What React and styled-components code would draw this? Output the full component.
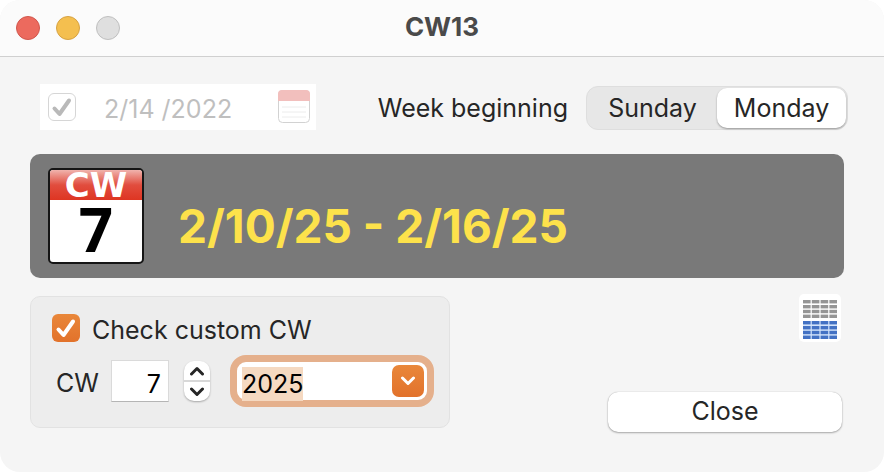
import { useEffect, useRef, useState } from "react";
import styled, { createGlobalStyle, css } from "styled-components";

const GRID_COLS = [4, 12.8, 21.6, 30.4];
const GRID_ROWS = [6, 11, 15.8, 20.6, 27, 32, 36.8, 41.6];

const CheckMark = ({ color }) => (
  <svg width="28" height="28" viewBox="0 0 28 28" aria-hidden="true">
    <path
      d="M6.5 15.5 11.5 21 21 7.5"
      fill="none"
      stroke={color}
      strokeWidth="4"
      strokeLinecap="round"
      strokeLinejoin="round"
    />
  </svg>
);

const Chevron = ({ up, color = "#262626" }) => (
  <svg width="16" height="10" viewBox="0 0 16 10" aria-hidden="true">
    <path
      d={up ? "M2.5 8 8 2.5 13.5 8" : "M2.5 2 8 7.5 13.5 2"}
      fill="none"
      stroke={color}
      strokeWidth="3"
      strokeLinecap="round"
      strokeLinejoin="round"
    />
  </svg>
);

const CalendarIcon = () => (
  <svg width="32" height="34" viewBox="0 0 32 34" aria-hidden="true">
    <rect x="0.5" y="0.5" width="31" height="32" rx="4" fill="#fff" stroke="#d2d2d2" />
    <path d="M0 11V4a4 4 0 0 1 4-4h24a4 4 0 0 1 4 4v7z" fill="#f2bfbd" />
    <path d="M4 17h24M4 22h24M4 27h24" stroke="#ececec" />
  </svg>
);

const WeekIcon = () => (
  <svg width="96" height="96" viewBox="0 0 96 96">
    <defs>
      <linearGradient id="head" x1="0" y1="0" x2="0" y2="1">
        <stop offset="0" stopColor="#f0b3ad" />
        <stop offset="0.5" stopColor="#e14d3e" />
        <stop offset="1" stopColor="#de3522" />
      </linearGradient>
    </defs>
    <rect x="1" y="1" width="94" height="94" rx="4" fill="#fff" stroke="#151515" strokeWidth="2" />
    <path d="M2 32V5a3 3 0 0 1 3-3h86a3 3 0 0 1 3 3v27z" fill="url(#head)" />
    <TileText x="48" y="29" $font="DejaVu Sans" $size={34} $color="#fff">
      CW
    </TileText>
    <TileText x="48" y="84" $font="Open Sans" $size={60} $color="#000">
      7
    </TileText>
  </svg>
);

const TableIcon = () => (
  <svg width="42" height="48" viewBox="0 0 42 48" aria-hidden="true">
    <rect width="42" height="48" rx="5" fill="#fff" />
    <rect x="4" y="27" width="34" height="18" fill="#d4e4fb" />
    {GRID_ROWS.map((y, row) =>
      GRID_COLS.map((x) => (
        <rect
          key={`${x}-${y}`}
          x={x}
          y={y}
          width="7.6"
          height="3.4"
          fill={row < 4 ? "#959595" : "#4472c4"}
        />
      ))
    )}
  </svg>
);

const App = () => {
  const [firstDay, setFirstDay] = useState("Monday");
  const [custom, setCustom] = useState(true);
  const [week, setWeek] = useState(7);
  const [year, setYear] = useState("2025");
  const yearRef = useRef(null);

  useEffect(() => {
    yearRef.current.focus();
    yearRef.current.select();
  }, []);

  return (
    <>
      <GlobalStyle />
      <Window>
        <TitleBar>
          <Lights>
            <Light type="button" aria-label="Close window" $color="#ec6a5e" $edge="#d0574d" />
            <Light type="button" aria-label="Minimize" $color="#f4bf4f" $edge="#d6a243" />
            <Light type="button" aria-label="Zoom" disabled $color="#dfdfdf" $edge="#bfbfbf" />
          </Lights>
          <Title>CW13</Title>
        </TitleBar>
        <Content>
          <TopRow>
            <DatePicker>
              <CheckWrap $disabled>
                <input type="checkbox" aria-label="Use date" checked disabled readOnly />
                <CheckMark color="#b9b9b9" />
              </CheckWrap>
              <DateInput aria-label="Date" value="2/14 /2022" disabled readOnly />
              <CalendarIcon />
            </DatePicker>
            <WeekStart>
              <span id="week-start">Week beginning</span>
              <Segments role="group" aria-labelledby="week-start">
                {["Sunday", "Monday"].map((day) => (
                  <Segment
                    key={day}
                    type="button"
                    aria-pressed={firstDay === day}
                    $active={firstDay === day}
                    onClick={() => setFirstDay(day)}
                  >
                    {day}
                  </Segment>
                ))}
              </Segments>
            </WeekStart>
          </TopRow>
          <Banner>
            <WeekIcon />
            <Range>2/10/25 - 2/16/25</Range>
          </Banner>
          <BottomRow>
            <CustomBox>
              <CheckLabel>
                <CheckWrap>
                  <input
                    type="checkbox"
                    checked={custom}
                    onChange={(e) => setCustom(e.target.checked)}
                  />
                  {custom && <CheckMark color="#fff" />}
                </CheckWrap>
                <LabelText>Check custom CW</LabelText>
              </CheckLabel>
              <Fields>
                <LabelText as="label" htmlFor="week">
                  CW
                </LabelText>
                <WeekInput
                  id="week"
                  value={week}
                  onChange={(e) => setWeek(Number(e.target.value) || 1)}
                />
                <Stepper>
                  <button type="button" aria-label="Next week" onClick={() => setWeek(week + 1)}>
                    <Chevron up />
                  </button>
                  <button type="button" aria-label="Previous week" onClick={() => setWeek(week - 1)}>
                    <Chevron />
                  </button>
                </Stepper>
                <Combo>
                  <YearInput
                    ref={yearRef}
                    aria-label="Year"
                    value={year}
                    onChange={(e) => setYear(e.target.value)}
                  />
                  <ComboButton type="button" aria-label="Choose year">
                    <Chevron color="#fff" />
                  </ComboButton>
                </Combo>
              </Fields>
            </CustomBox>
            <Side>
              <IconButton type="button" aria-label="Show table">
                <TableIcon />
              </IconButton>
              <CloseButton type="button">Close</CloseButton>
            </Side>
          </BottomRow>
        </Content>
      </Window>
    </>
  );
};

export default App;

const GlobalStyle = createGlobalStyle`
  * {
    box-sizing: border-box;
  }

  body {
    margin: 0;
    background: #fff;
    color: #262626;
    font-family: Inter, "Liberation Sans", sans-serif;
    font-size: 25px;
    line-height: 32px;
  }

  button,
  input {
    margin: 0;
    padding: 0;
    border: none;
    color: inherit;
    font: inherit;
  }

  svg {
    display: block;
    flex: none;
  }
`;

const Window = styled.main`
  min-height: 100vh;
  background: #f5f5f5;
  border-radius: 20px;
  overflow: hidden;
`;

const TitleBar = styled.header`
  display: grid;
  grid-template-columns: 1fr auto 1fr;
  align-items: center;
  height: 57px;
  background: #fbfbfb;
  border-bottom: 1px solid #d0d0d0;
  padding: 0 16px;
`;

const Lights = styled.div`
  display: flex;
  gap: 16px;
`;

const Light = styled.button`
  width: 24px;
  height: 24px;
  border-radius: 50%;
  border: 1px solid ${({ $edge }) => $edge};
  background: ${({ $color }) => $color};
`;

const Title = styled.h1`
  margin: 0;
  padding-bottom: 2px;
  color: #4a4a4a;
  font-size: 26px;
  font-weight: 700;
`;

const Content = styled.div`
  display: flex;
  flex-direction: column;
  padding: 27px 40px 40px 30px;
`;

const TopRow = styled.div`
  display: flex;
  align-items: center;
  justify-content: space-between;
  margin: 0 -4px 24px 10px;
`;

const DatePicker = styled.div`
  display: flex;
  align-items: center;
  width: 276px;
  height: 46px;
  padding: 0 6px 0 8px;
  background: #fff;
`;

const CheckWrap = styled.span`
  display: grid;
  flex: none;

  > * {
    grid-area: 1 / 1;
  }

  svg {
    pointer-events: none;
    z-index: 1;
  }

  input {
    appearance: none;
    width: 28px;
    height: 28px;
    border-radius: 6px;
    background: #fff;
    border: 1px solid #d6d6d6;

    &:checked {
      ${({ $disabled }) =>
        !$disabled &&
        css`
          background: linear-gradient(#e9873a, #e2722b);
          border: none;
        `}
    }
  }
`;

const DateInput = styled.input`
  flex: 1;
  min-width: 0;
  margin-left: 28px;
  padding-top: 4px;
  background: none;
  color: #bfbfbf;
`;

const WeekStart = styled.div`
  display: flex;
  align-items: center;
  gap: 18px;
  padding-top: 2px;
`;

const Segments = styled.div`
  display: flex;
  width: 262px;
  height: 44px;
  padding: 1px;
  border: 1px solid #dedede;
  border-radius: 12px;
  background: #e7e7e7;
`;

const Segment = styled.button`
  flex: 1;
  border-radius: 10px;
  background: ${({ $active }) => ($active ? "#fff" : "transparent")};
  box-shadow: ${({ $active }) => ($active ? "0 1px 2px rgba(0, 0, 0, 0.35)" : "none")};
`;

const Banner = styled.section`
  display: flex;
  align-items: center;
  gap: 34px;
  height: 124px;
  padding: 0 18px;
  border-radius: 10px;
  background: #797979;
`;

const TileText = styled.text`
  fill: ${({ $color }) => $color};
  font-family: "${({ $font }) => $font}", sans-serif;
  font-size: ${({ $size }) => $size}px;
  font-weight: 700;
  text-anchor: middle;
`;

const Range = styled.p`
  margin: 20px 0 0;
  color: #fde24b;
  font-size: 46px;
  font-weight: 700;
  line-height: 56px;
`;

const BottomRow = styled.div`
  display: flex;
  justify-content: space-between;
  margin-top: 18px;
`;

const CustomBox = styled.section`
  width: 420px;
  height: 132px;
  padding: 15px 15px 20px 21px;
  border: 1px solid #e2e2e2;
  border-radius: 10px;
  background: #ededed;
`;

const CheckLabel = styled.label`
  display: flex;
  align-items: center;
  gap: 12px;
  height: 32px;
`;

const LabelText = styled.span`
  padding-top: 3px;
`;

const Fields = styled.div`
  display: flex;
  align-items: center;
  height: 52px;
  margin: 11px 0 0 4px;
`;

const WeekInput = styled.input`
  width: 58px;
  height: 42px;
  margin-left: 12px;
  padding: 6px 7px 0 0;
  border: 1px solid #dadada;
  border-bottom-color: #b5b5b5;
  background: #fff;
  color: #000;
  text-align: right;
`;

const Stepper = styled.div`
  display: flex;
  flex-direction: column;
  width: 26px;
  height: 40px;
  margin-left: 15px;
  border-radius: 10px;
  background: #fff;
  box-shadow: 0 1px 2px rgba(0, 0, 0, 0.3);

  button {
    display: grid;
    place-items: center;
    flex: 1;
    background: none;
  }

  button + button {
    border-top: 2px solid #d8d8d8;
  }
`;

const Combo = styled.div`
  display: flex;
  align-items: center;
  width: 204px;
  height: 52px;
  margin-left: auto;
  padding: 0 3px 0 5px;
  border: 7px solid #e5b08c;
  border-radius: 16px;
  background: #fff;
`;

const YearInput = styled.input`
  flex: 1;
  min-width: 0;
  height: 34px;
  margin-top: 6px;
  background: none;
  color: #000;
  line-height: 34px;
  outline: none;

  &::selection {
    background: #f5d9c1;
    color: #000;
  }
`;

const ComboButton = styled.button`
  display: grid;
  place-items: center;
  width: 32px;
  height: 32px;
  border-radius: 7px;
  background: linear-gradient(#e9873a, #e2722b);
`;

const Side = styled.div`
  display: flex;
  flex-direction: column;
  align-items: flex-end;
  justify-content: space-between;
  width: 236px;
  margin: -2px 0 -4px;
  padding-right: 2px;
`;

const IconButton = styled.button`
  margin-right: 1px;
  background: none;
`;

const CloseButton = styled.button`
  width: 100%;
  height: 40px;
  padding-bottom: 2px;
  border-radius: 10px;
  background: #fff;
  box-shadow: 0 0 1px rgba(0, 0, 0, 0.3), 0 1px 2px rgba(0, 0, 0, 0.3);
`;
